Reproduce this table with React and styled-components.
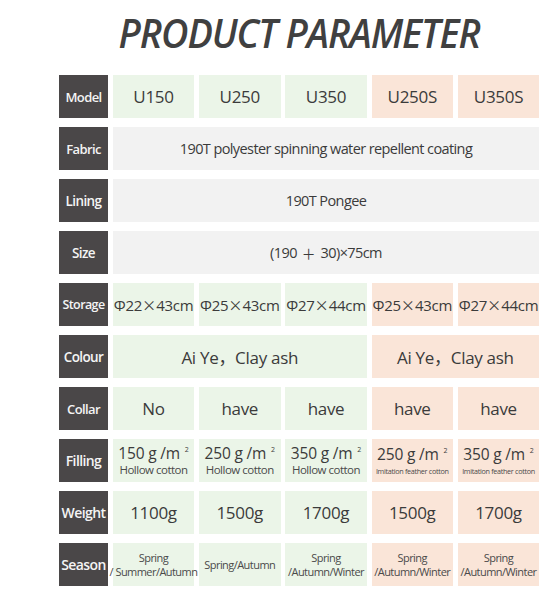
import styled, { createGlobalStyle } from "styled-components";

const GlobalStyle = createGlobalStyle`
  html, body {
    margin: 0;
    padding: 0;
    background: #ffffff;
  }
  body {
    font-family: "Open Sans", "Noto Sans", "Noto Sans CJK SC", sans-serif;
    color: #3b3b3b;
  }
`;

const green = "#ebf5e8";
const peach = "#fae5d8";
const gray = "#f2f2f2";

const models = ["U150", "U250", "U350", "U250S", "U350S"];
const storage = [
  ["22", "43"],
  ["25", "43"],
  ["27", "44"],
  ["25", "43"],
  ["27", "44"],
];
const collar = ["No", "have", "have", "have", "have"];
const filling = [
  { g: "150", kind: "Hollow cotton" },
  { g: "250", kind: "Hollow cotton" },
  { g: "350", kind: "Hollow cotton" },
  { g: "250", kind: "Imitation feather cotton", tiny: true },
  { g: "350", kind: "Imitation feather cotton", tiny: true },
];
const weight = ["1100g", "1500g", "1700g", "1500g", "1700g"];
const season = [
  ["Spring", "/ Summer/Autumn"],
  ["Spring/Autumn"],
  ["Spring", "/Autumn/Winter"],
  ["Spring", "/Autumn/Winter"],
  ["Spring", "/Autumn/Winter"],
];

const tone = (i) => (i < 3 ? green : peach);

export default function App() {
  return (
    <Page>
      <GlobalStyle />
      <TitleRow>
        <Title>PRODUCT PARAMETER</Title>
      </TitleRow>
      <Table>
        <Label>Model</Label>
        {models.map((m, i) => (
          <Cell key={m} bg={tone(i)} size={17}>{m}</Cell>
        ))}

        <Label>Fabric</Label>
        <Cell bg={gray} span={5} size={14.5} tight>190T polyester spinning water repellent coating</Cell>

        <Label size={13.5}>Lining</Label>
        <Cell bg={gray} span={5} size={14.5} tight>190T Pongee</Cell>

        <Label size={13.5}>Size</Label>
        <Cell bg={gray} span={5} size={14.5} tight>
          (190<Wide pad={5}>＋</Wide>30)×75cm
        </Cell>

        <Label size={12.5}>Storage</Label>
        {storage.map(([d, h], i) => (
          <Cell key={i} bg={tone(i)} size={15}>
            Φ{d}<Wide>×</Wide>{h}cm
          </Cell>
        ))}

        <Label size={13.5}>Colour</Label>
        <Cell bg={green} span={3} size={17}>Ai Ye，Clay ash</Cell>
        <Cell bg={peach} span={2} size={17}>Ai Ye，Clay ash</Cell>

        <Label>Collar</Label>
        {collar.map((c, i) => (
          <Cell key={i} bg={tone(i)} size={17}>{c}</Cell>
        ))}

        <Label size={14}>Filling</Label>
        {filling.map((f, i) => (
          <Cell key={i} bg={tone(i)} stack>
            <Grams>
              {f.g} g /m<Sup>2</Sup>
            </Grams>
            <Kind tiny={f.tiny}>{f.kind}</Kind>
          </Cell>
        ))}

        <Label size={14}>Weight</Label>
        {weight.map((w, i) => (
          <Cell key={i} bg={tone(i)} size={17}>{w}</Cell>
        ))}

        <Label size={14}>Season</Label>
        {season.map((lines, i) => (
          <Cell key={i} bg={tone(i)} stack>
            {lines.map((l) => (
              <SeasonLine key={l}>{l}</SeasonLine>
            ))}
          </Cell>
        ))}
      </Table>
    </Page>
  );
}

const Page = styled.div`
  width: 546px;
  height: 600px;
  padding-left: 59px;
  box-sizing: border-box;
`;

const TitleRow = styled.div`
  width: 480px;
  padding-top: 13px;
  height: 39px;
  display: flex;
  justify-content: center;
  margin-bottom: 23px;
`;

const Title = styled.h1`
  margin: 0;
  font-family: "Open Sans", sans-serif;
  font-style: italic;
  font-weight: 600;
  font-size: 39px;
  line-height: 1;
  letter-spacing: -1.1px;
  color: #404040;
  white-space: nowrap;
  transform: scaleX(0.97);
`;

const Table = styled.div`
  display: grid;
  grid-template-columns: 49px repeat(5, 81.5px);
  grid-auto-rows: 43px;
  column-gap: 4.75px;
  row-gap: 9px;
  width: 480px;
`;

const Label = styled.div`
  background: #4a4748;
  color: #f4f4f4;
  display: flex;
  align-items: center;
  justify-content: center;
  font-size: ${(p) => p.size || 13}px;
  font-weight: 600;
  letter-spacing: -0.6px;
  white-space: nowrap;
  overflow: hidden;
`;

const Cell = styled.div`
  background: ${(p) => p.bg};
  grid-column: span ${(p) => p.span || 1};
  display: flex;
  flex-direction: ${(p) => (p.stack ? "column" : "row")};
  align-items: center;
  justify-content: center;
  font-size: ${(p) => p.size || 15}px;
  letter-spacing: ${(p) => (p.tight ? -0.6 : -0.3)}px;
  color: #3b3b3b;
  white-space: nowrap;
`;

const Wide = styled.span`
  font-family: "Noto Sans CJK SC", sans-serif;
  font-size: 0.95em;
  letter-spacing: 0;
  margin: 0 ${(p) => p.pad || 0}px;
`;

const Grams = styled.div`
  font-size: 15.5px;
  line-height: 17px;
  letter-spacing: -0.2px;
`;

const Sup = styled.sup`
  font-size: 7px;
  line-height: 0;
  margin-left: 5px;
  vertical-align: 7px;
`;

const Kind = styled.div`
  font-size: ${(p) => (p.tiny ? 7.2 : 11.5)}px;
  line-height: ${(p) => (p.tiny ? 10 : 13)}px;
  margin-top: ${(p) => (p.tiny ? 3 : 1)}px;
  letter-spacing: ${(p) => (p.tiny ? -0.3 : -0.5)}px;
  color: #4a4a4a;
`;

const SeasonLine = styled.div`
  font-size: 11px;
  line-height: 13.5px;
  letter-spacing: -0.55px;
  color: #4a4a4a;
`;
